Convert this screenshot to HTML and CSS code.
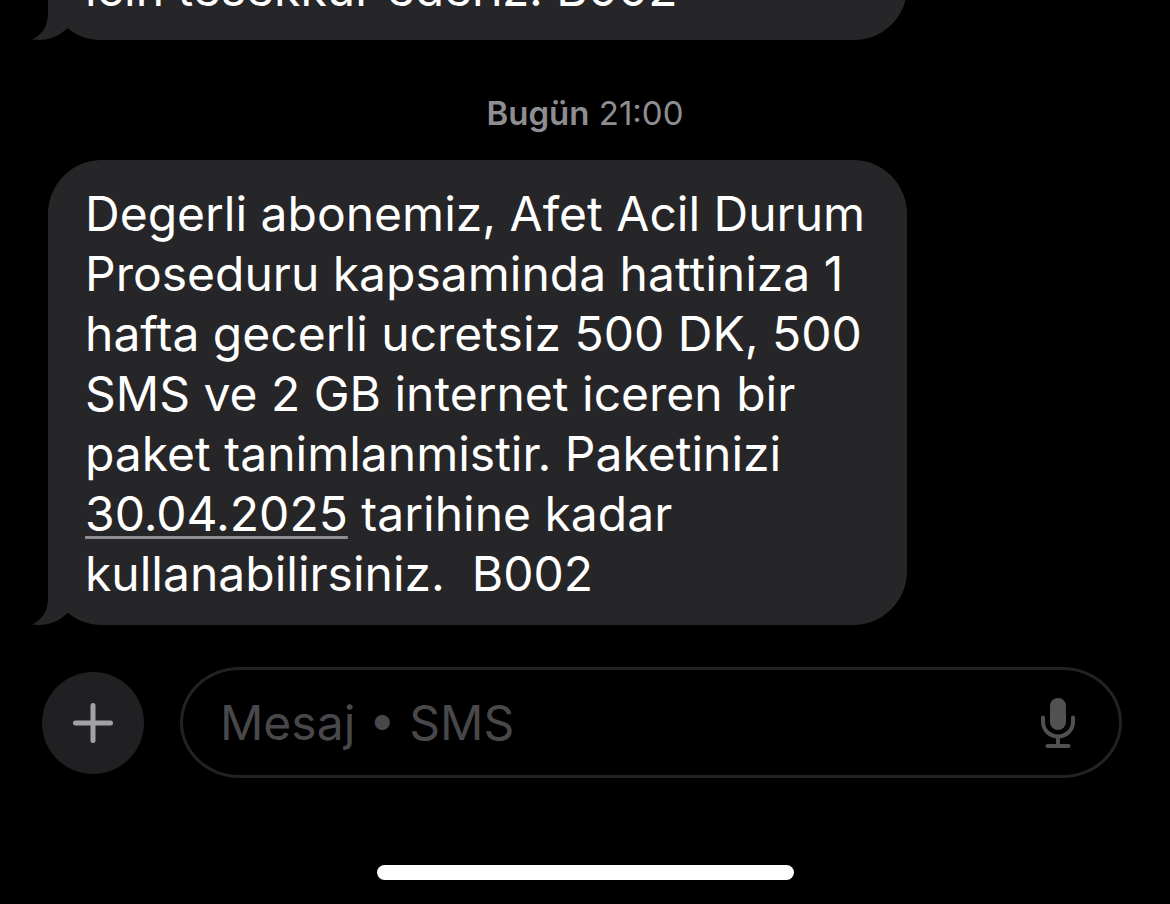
FILE: index.html
```
<!DOCTYPE html>
<html lang="tr">
<head>
<meta charset="utf-8">
<meta name="viewport" content="width=device-width, initial-scale=1">
<title>Mesajlar</title>
<link rel="stylesheet" href="styles.css">
</head>
<body class="screen">
  <main class="thread">
    <div class="bubble">
      <p class="bubble-text">icin tesekkur ederiz. B002</p>
      <svg class="tail" viewBox="0 0 36 54" aria-hidden="true"><path d="M16 0V28C16 40 10 49 0 53.500C13 55 24 53 35.500 42L36 0Z"/></svg>
    </div>
    <p class="timestamp"><strong class="day">Bugün</strong> <time>21:00</time></p>
    <div class="bubble">
      <p class="bubble-text">Degerli abonemiz, Afet Acil Durum<br>Proseduru kapsaminda hattiniza 1<br>hafta gecerli ucretsiz 500 DK, 500<br>SMS ve 2 GB internet iceren bir<br>paket tanimlanmistir. Paketinizi<br><a class="date-link" href="#">30.04.2025</a> tarihine kadar<br>kullanabilirsiniz.&nbsp; B002</p>
      <svg class="tail" viewBox="0 0 36 54" aria-hidden="true"><path d="M16 0V28C16 40 10 49 0 53.500C13 55 24 53 35.500 42L36 0Z"/></svg>
    </div>
  </main>
  <footer class="footer">
    <form class="composer">
      <button class="add" type="button" aria-label="Ekle">
        <svg class="add-icon" viewBox="0 0 40 40" aria-hidden="true"><path d="M20 2.500V37.500M2.500 20H37.500"/></svg>
      </button>
      <div class="field">
        <input class="field-input" type="text" placeholder="Mesaj • SMS" aria-label="Mesaj">
        <button class="mic" type="button" aria-label="Dikte">
          <svg class="mic-icon" viewBox="0 0 36 50" aria-hidden="true">
            <rect class="mic-body" x="10" y="0" width="16" height="32" rx="8"/>
            <path class="mic-stand" d="M3 19.500V24A15 14.500 0 0 0 33 24V19.500M18 39V48M7.500 48H28.500"/>
          </svg>
        </button>
      </div>
    </form>
    <div class="home-indicator"></div>
  </footer>
</body>
</html>
```
FILE: styles.css
```
* {
  box-sizing: border-box;
}

.screen {
  margin: 0;
  height: 100vh;
  display: flex;
  flex-direction: column;
  overflow: hidden;
  background: #000;
  color: #fff;
  font-family: Inter, "Liberation Sans", sans-serif;
}

.thread {
  flex: 1;
  min-height: 0;
  display: flex;
  flex-direction: column;
  justify-content: flex-end;
  align-items: flex-start;
  padding: 0 48px 42px;
}

.bubble {
  position: relative;
  flex: none;
  width: 80%;
  padding: 24px 36px 21px 37px;
  border-radius: 54px;
  background: #262628;
}

.bubble-text {
  margin: 0;
  font-size: 48px;
  line-height: 60px;
  white-space: nowrap;
}

.tail {
  position: absolute;
  left: -16px;
  bottom: 0;
  width: 36px;
  height: 54px;
  fill: #262628;
}

.date-link {
  color: inherit;
  text-decoration: underline;
  text-decoration-color: #8e8e92;
  text-decoration-thickness: 3px;
  text-underline-offset: 5px;
  text-decoration-skip-ink: none;
}

.timestamp {
  align-self: center;
  flex: none;
  margin: 53px 0 27px;
  font-size: 33px;
  line-height: 40px;
  color: #8e8e92;
}

.day {
  font-weight: 600;
}

.footer {
  flex: none;
  display: flex;
  flex-direction: column;
  gap: 87px;
  padding-bottom: 24px;
}

.composer {
  display: flex;
  align-items: center;
  gap: 36px;
  padding: 0 48px 0 42px;
}

.add {
  flex: none;
  display: grid;
  place-items: center;
  width: 102px;
  height: 102px;
  padding: 0;
  border: 0;
  border-radius: 50%;
  background: #202022;
}

.add-icon {
  width: 40px;
  height: 40px;
  fill: none;
  stroke: #a2a2a4;
  stroke-width: 5;
  stroke-linecap: round;
}

.field {
  flex: 1;
  display: flex;
  align-items: center;
  height: 111px;
  padding: 0 43px 0 37px;
  border: 3px solid #222223;
  border-radius: 60px / 56px;
}

.field-input {
  flex: 1;
  min-width: 0;
  padding: 0;
  border: 0;
  outline: 0;
  background: transparent;
  color: #fff;
  font-family: inherit;
  font-size: 48px;
  line-height: 60px;
}

.field-input::placeholder {
  color: #48484a;
  opacity: 1;
}

.mic {
  flex: none;
  display: grid;
  padding: 0;
  border: 0;
  background: none;
}

.mic-icon {
  width: 36px;
  height: 50px;
}

.mic-body {
  fill: #515153;
}

.mic-stand {
  fill: none;
  stroke: #515153;
  stroke-width: 4;
  stroke-linecap: round;
}

.home-indicator {
  align-self: center;
  width: 417px;
  height: 15px;
  border-radius: 8px;
  background: #fff;
}
```
